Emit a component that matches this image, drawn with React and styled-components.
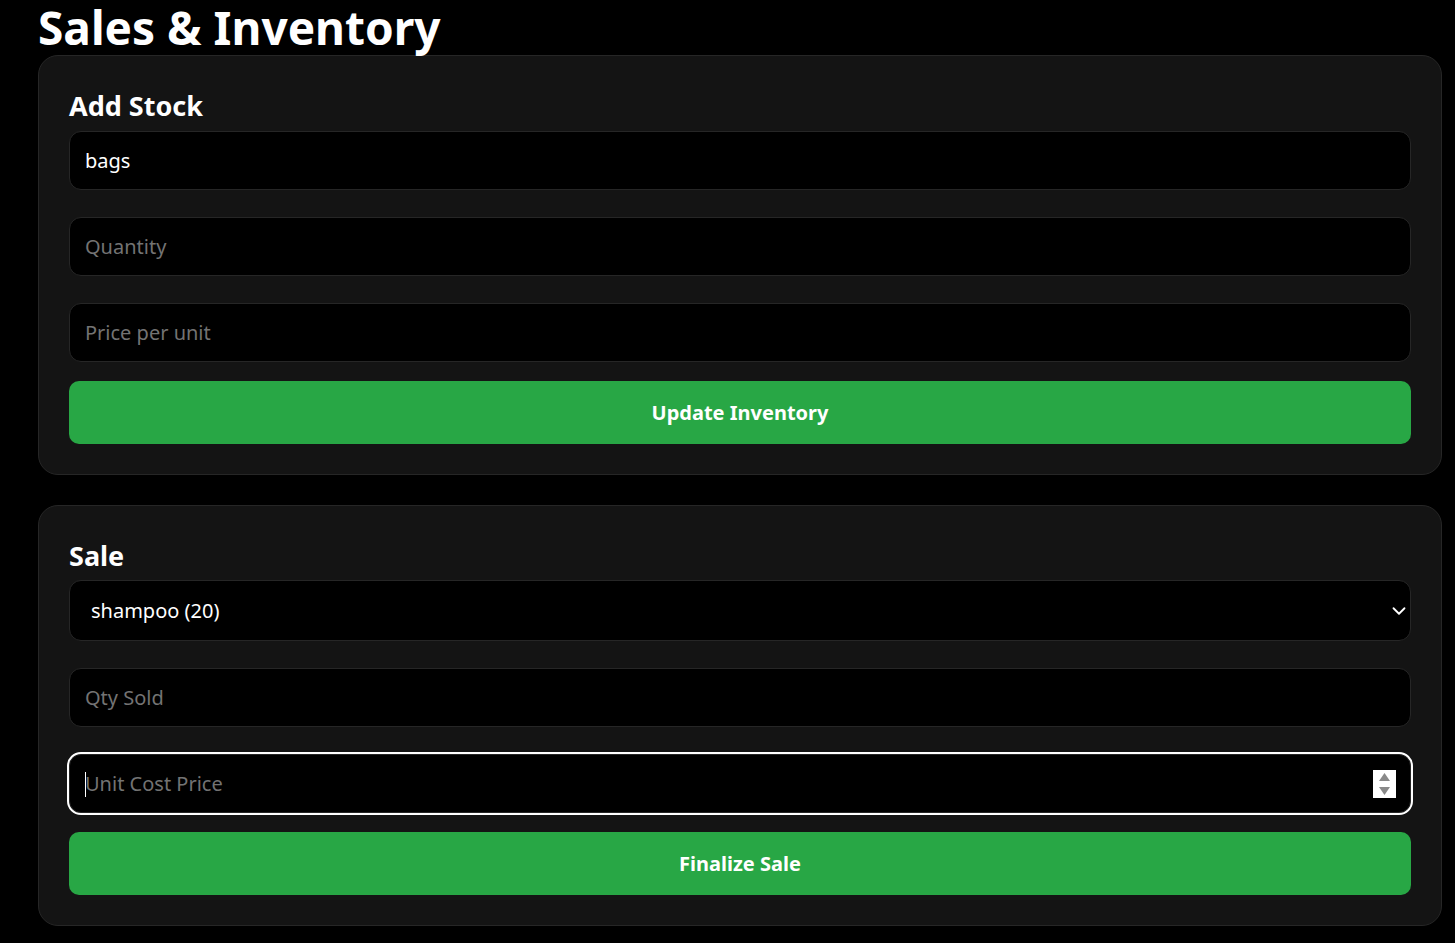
import React from 'react'
import styled, { createGlobalStyle } from 'styled-components'
import { ChevronDown } from 'lucide-react'

const GlobalStyle = createGlobalStyle`
    html, body {
        margin: 0;
        padding: 0;
        background: #000;
        color: #fff;
        font-family: "Noto Sans", "Open Sans", sans-serif;
    }
    * {
        box-sizing: border-box;
    }
`;

function App() {
    return (
        <>
            <GlobalStyle />
            <PageStyled>
                <h1>Sales &amp; Inventory</h1>

                <Card>
                    <h2>Add Stock</h2>
                    <Field type="text" defaultValue="bags" />
                    <Field type="number" placeholder="Quantity" />
                    <Field type="number" placeholder="Price per unit" />
                    <ActionButton>Update Inventory</ActionButton>
                </Card>

                <Card $spaced>
                    <h2>Sale</h2>
                    <SelectWrap>
                        <Select defaultValue="shampoo">
                            <option value="shampoo">shampoo (20)</option>
                            <option value="bags">bags (0)</option>
                        </Select>
                        <ChevronDown className="chevron" size={22} strokeWidth={2} />
                    </SelectWrap>
                    <Field type="number" placeholder="Qty Sold" />
                    <FocusWrap>
                        <Field type="number" placeholder="Unit Cost Price" $focused />
                        <Caret />
                        <Spinner>
                            <svg width="23" height="28" viewBox="0 0 23 28">
                                <path d="M11.5 3 L17 11 L6 11 Z" fill="#8a8a8a" />
                                <path d="M11.5 25 L17 17 L6 17 Z" fill="#8a8a8a" />
                            </svg>
                        </Spinner>
                    </FocusWrap>
                    <ActionButton>Finalize Sale</ActionButton>
                </Card>
            </PageStyled>
        </>
    )
}

const PageStyled = styled.div`
    padding: 0 13px 20px 38px;
    min-height: 943px;

    h1 {
        margin: 0;
        font-size: 46px;
        font-weight: 700;
        line-height: 1.2;
        color: #fff;
    }
`;

const Card = styled.section`
    margin-top: ${props => props.$spaced ? '30px' : '0'};
    background: #141414;
    border: 1px solid #262626;
    border-radius: 20px;
    padding: 32px 30px 30px;
    display: flex;
    flex-direction: column;
    gap: 27px;

    h2 {
        margin: 2px 0 -19px;
        font-size: 27px;
        font-weight: 700;
        line-height: 1.2;
        color: #fff;
    }
`;

const Field = styled.input`
    display: block;
    width: 100%;
    height: 59px;
    padding: 0 15px;
    background: #000;
    color: #fff;
    border: 1px solid #262626;
    border-radius: 12px;
    font-family: inherit;
    font-size: 20px;
    outline: ${props => props.$focused ? '2px solid #fff' : 'none'};
    outline-offset: 0;
    -moz-appearance: textfield;

    &::placeholder {
        color: #737373;
    }

    &::-webkit-outer-spin-button,
    &::-webkit-inner-spin-button {
        -webkit-appearance: none;
        margin: 0;
    }
`;

const SelectWrap = styled.div`
    position: relative;

    .chevron {
        position: absolute;
        right: 1px;
        top: 20px;
        color: #fff;
        pointer-events: none;
    }
`;

const Select = styled.select`
    display: block;
    width: 100%;
    height: 61px;
    padding: 0 21px;
    background: #000;
    color: #fff;
    border: 1px solid #262626;
    border-radius: 12px;
    font-family: inherit;
    font-size: 20px;
    appearance: none;
    outline: none;
`;

const FocusWrap = styled.div`
    position: relative;
`;

const Caret = styled.span`
    position: absolute;
    left: 16px;
    top: 18px;
    width: 1px;
    height: 25px;
    background: #fff;
`;

const Spinner = styled.span`
    position: absolute;
    right: 15px;
    top: 16px;
    width: 23px;
    height: 28px;
    background: #fff;
    display: flex;
`;

const ActionButton = styled.button`
    width: 100%;
    height: 63px;
    margin-top: -8px;
    border: none;
    border-radius: 10px;
    background: #28a745;
    color: #fff;
    font-family: inherit;
    font-size: 20px;
    font-weight: 700;
    cursor: pointer;
`;

export default App;
